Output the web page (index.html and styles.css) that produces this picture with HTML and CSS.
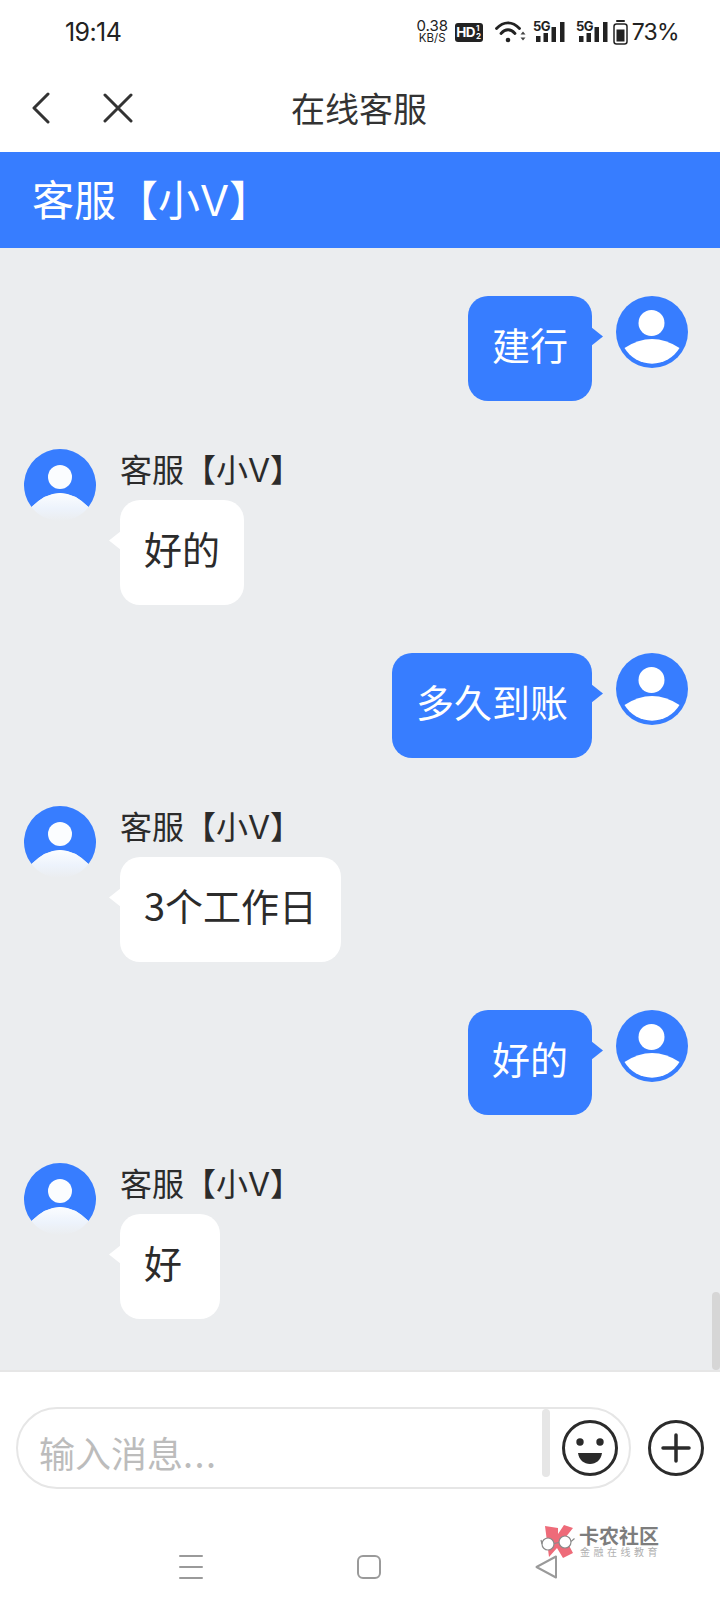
FILE: index.html
```html
<!DOCTYPE html>
<html lang="zh-CN">
<head>
<meta charset="utf-8">
<title>在线客服</title>
<link rel="stylesheet" href="styles.css">
</head>
<body>
<svg class="defs" width="0" height="0" aria-hidden="true">
  <defs>
    <linearGradient id="fade" x1="0" y1="0" x2="0" y2="1">
      <stop offset="0" stop-color="#fbfdff"/>
      <stop offset="0.55" stop-color="#edf3fc"/>
      <stop offset="1" stop-color="#ebedef"/>
    </linearGradient>
    <symbol id="av-user" viewBox="0 0 72 72">
      <circle cx="36" cy="36" r="36" fill="#377dff"/>
      <circle cx="35.500" cy="27" r="13" fill="#fff"/>
      <path d="M8.500 52Q36 34 63.500 52A32 32 0 0 1 8.500 52Z" fill="#fff"/>
    </symbol>
    <symbol id="av-agent" viewBox="0 0 72 72">
      <path d="M7.500 58A36 36 0 1 1 64.500 58Q36 30 7.500 58Z" fill="#377dff"/>
      <circle cx="36" cy="28" r="12" fill="#fbfdff"/>
      <path d="M7.500 58Q36 30 64.500 58A36 36 0 0 1 7.500 58Z" fill="url(#fade)"/>
    </symbol>
    <symbol id="signal" viewBox="0 0 32 26">
      <rect x="3" y="17" width="4.500" height="6" fill="#222"/>
      <rect x="10.500" y="14" width="4.500" height="9" fill="#222"/>
      <rect x="18.500" y="8" width="4.500" height="15" fill="#222"/>
      <rect x="27" y="3" width="4.500" height="20" fill="#222"/>
      <text x="0" y="12" class="sig-text">5G</text>
    </symbol>
  </defs>
</svg>

<div class="app">
  <header class="status">
    <span class="time">19:14</span>
    <div class="status-right">
      <div class="speed"><span class="speed-num">0.38</span><span class="speed-unit">KB/S</span></div>
      <div class="hd"><span class="hd-main">HD</span><span class="hd-frac">1<br>2</span></div>
      <svg class="wifi" width="31" height="24" viewBox="0 0 31 24" fill="none" stroke="#222" stroke-width="2.800" stroke-linecap="round">
        <path d="M1.500 8.500C8.500 1 17.500 1 24.500 8.500"/>
        <path d="M6 13.500C10.500 8.500 15.500 8.500 20 13.500"/>
        <circle cx="13" cy="20" r="2.300" fill="#222" stroke="none"/>
        <path d="M25.500 14.500h5l-2.500-3zM25.500 17.500h5l-2.500 3z" fill="#444" stroke="none"/>
      </svg>
      <svg class="sig1" width="32" height="26"><use href="#signal"/></svg>
      <svg class="sig2" width="32" height="26"><use href="#signal"/></svg>
      <svg class="batt" width="15" height="25" viewBox="0 0 15 25" fill="none">
        <path d="M4 1h7" stroke="#222" stroke-width="2" stroke-linecap="round"/>
        <rect x="1" y="4" width="13" height="20" rx="2.500" stroke="#222" stroke-width="1.500"/>
        <rect x="3.500" y="9.500" width="8" height="12" fill="#222"/>
      </svg>
      <span class="pct">73%</span>
    </div>
  </header>

  <nav class="topnav">
    <svg class="back" width="20" height="32" viewBox="0 0 20 32" fill="none" stroke="#333" stroke-width="3" stroke-linecap="round" stroke-linejoin="round">
      <path d="M17 2L3 16l14 14"/>
    </svg>
    <svg class="close" width="30" height="30" viewBox="0 0 30 30" fill="none" stroke="#333" stroke-width="3" stroke-linecap="round">
      <path d="M2 2l26 26M28 2L2 28"/>
    </svg>
    <h1 class="title">在线客服</h1>
  </nav>

  <div class="band">客服【小V】</div>

  <main class="chat">
    <div class="row row-me">
      <div class="bubble bubble-me">建行</div>
      <svg class="avatar"><use href="#av-user"/></svg>
    </div>
    <div class="row row-agent">
      <svg class="avatar"><use href="#av-agent"/></svg>
      <div class="agent-col">
        <div class="name">客服【小V】</div>
        <div class="bubble bubble-agent">好的</div>
      </div>
    </div>
    <div class="row row-me">
      <div class="bubble bubble-me">多久到账</div>
      <svg class="avatar"><use href="#av-user"/></svg>
    </div>
    <div class="row row-agent">
      <svg class="avatar"><use href="#av-agent"/></svg>
      <div class="agent-col">
        <div class="name">客服【小V】</div>
        <div class="bubble bubble-agent">3个工作日</div>
      </div>
    </div>
    <div class="row row-me">
      <div class="bubble bubble-me">好的</div>
      <svg class="avatar"><use href="#av-user"/></svg>
    </div>
    <div class="row row-agent">
      <svg class="avatar"><use href="#av-agent"/></svg>
      <div class="agent-col">
        <div class="name">客服【小V】</div>
        <div class="bubble bubble-agent">好</div>
      </div>
    </div>
    <div class="scrollbar"></div>
  </main>

  <footer class="composer">
    <div class="input-row">
      <div class="pill">
        <span class="placeholder">输入消息<span class="dots">...</span></span>
        <span class="pill-bar"></span>
        <svg class="round-icon" width="56" height="56" viewBox="0 0 56 56">
          <circle cx="28" cy="28" r="26.500" fill="none" stroke="#2b2b2b" stroke-width="3"/>
          <circle cx="18" cy="22" r="3.700" fill="#2b2b2b"/>
          <circle cx="38" cy="22" r="3.700" fill="#2b2b2b"/>
          <path d="M16 33H40C39 40 34 44 28 44S17 40 16 33Z" fill="#2b2b2b"/>
        </svg>
      </div>
      <svg class="round-icon" width="56" height="56" viewBox="0 0 56 56" fill="none" stroke="#2b2b2b">
        <circle cx="28" cy="28" r="26.500" stroke-width="3"/>
        <path d="M15 28H41M28 15V41" stroke-width="3.500" stroke-linecap="round"/>
      </svg>
    </div>
    <div class="sysnav">
      <svg width="24" height="24" viewBox="0 0 24 24" stroke="#9a9a9a" stroke-width="2" stroke-linecap="round"><path d="M1 1H23M1 12H23M1 23H23"/></svg>
      <svg width="24" height="24" viewBox="0 0 24 24" fill="none" stroke="#9a9a9a" stroke-width="2"><rect x="1" y="1" width="22" height="22" rx="5"/></svg>
      <svg width="22" height="24" viewBox="0 0 22 24" fill="none" stroke="#9a9a9a" stroke-width="2" stroke-linejoin="round"><path d="M21 1.500V22.500L1.500 12Z"/></svg>
    </div>
    <div class="mark">
      <svg class="mark-logo" width="36" height="36" viewBox="0 0 36 36">
        <path d="M5 2L18 4V10L24 1L33 4L25 14L33 29L23 34L17 24L9 33Z" fill="#ee6b79"/>
        <circle cx="8" cy="20" r="6" fill="#fff" stroke="#8a8a8a" stroke-width="1.200"/>
        <circle cx="25" cy="18" r="6" fill="#fff" stroke="#8a8a8a" stroke-width="1.200"/>
        <path d="M14 19.500L19 18.500M31 17.500L34.500 14.500M2 20L1 16" stroke="#8a8a8a" stroke-width="1.200" fill="none"/>
      </svg>
      <div class="mark-text">
        <span class="mark-title">卡农社区</span>
        <span class="mark-sub">金融在线教育</span>
      </div>
    </div>
  </footer>
</div>
</body>
</html>
```

FILE: styles.css
```css
* { box-sizing: border-box; }

html, body {
  margin: 0;
  padding: 0;
}

body {
  width: 720px;
  height: 1612px;
  overflow: hidden;
  background: #fff;
  color: #2b2b2b;
  font-family: "Noto Sans CJK SC", "Noto Sans", sans-serif;
}

.defs { position: absolute; }

.app {
  display: flex;
  flex-direction: column;
  height: 1612px;
}

/* status bar */
.status {
  height: 64px;
  display: flex;
  align-items: center;
  justify-content: space-between;
  padding: 0 41px 0 65px;
  font-family: Inter, "Liberation Sans", sans-serif;
  color: #222;
  flex: none;
}

.time {
  font-size: 25px;
  letter-spacing: -0.600px;
}

.status-right {
  display: flex;
  align-items: center;
}

.speed {
  display: flex;
  flex-direction: column;
  align-items: center;
  width: 33px;
  line-height: 13px;
}

.speed-num { font-size: 15px; }
.speed-unit { font-size: 11.500px; }

.hd {
  margin-left: 6px;
  width: 28px;
  height: 19px;
  border-radius: 3px;
  background: #222;
  color: #fff;
  display: flex;
  align-items: center;
  justify-content: center;
  font-weight: 700;
}

.hd-main { font-size: 13.500px; letter-spacing: -0.500px; }
.hd-frac { font-size: 8px; line-height: 8px; margin-left: 1px; }

.wifi { margin-left: 12px; }
.sig1 { margin-left: 7px; }
.sig2 { margin-left: 11px; }
.batt { margin-left: 5px; }

.sig-text {
  font-family: Inter, "Liberation Sans", sans-serif;
  font-size: 13px;
  font-weight: 700;
  fill: #222;
  letter-spacing: -0.500px;
}

.pct {
  margin-left: 4px;
  font-size: 23px;
  letter-spacing: -0.700px;
}

/* top navigation */
.topnav {
  position: relative;
  height: 88px;
  display: flex;
  align-items: center;
  padding-left: 31px;
  flex: none;
}

.close { margin-left: 52px; }

.title {
  flex: none;
  margin: 0 0 0 158px;
  font-size: 34px;
  font-weight: 400;
  color: #333;
  line-height: 48px;
}

/* blue band */
.band {
  height: 96px;
  flex: none;
  background: #377dff;
  color: #fff;
  font-family: Inter, "Noto Sans CJK SC", sans-serif;
  font-size: 42px;
  line-height: 98px;
  padding-left: 32px;
  overflow: hidden;
}

/* chat */
.chat {
  position: relative;
  flex: 1;
  background: #ebedef;
  padding-top: 48px;
  display: flex;
  flex-direction: column;
  gap: 48px;
  overflow: hidden;
}

.row { display: flex; gap: 24px; }
.row-me { justify-content: flex-end; padding-right: 32px; }
.row-agent { padding-left: 24px; }

.avatar {
  width: 72px;
  height: 72px;
  flex: none;
}

.agent-col {
  display: flex;
  flex-direction: column;
  align-items: flex-start;
}

.name {
  height: 51px;
  font-family: Inter, "Noto Sans CJK SC", sans-serif;
  font-size: 32px;
  line-height: 44px;
  color: #2b2b2b;
}

.bubble {
  position: relative;
  min-width: 100px;
  height: 105px;
  padding: 0 24px;
  border-radius: 20px;
  font-size: 38px;
  line-height: 95px;
}

.bubble-me {
  background: #377dff;
  color: #fff;
}

.bubble-agent {
  background: #fff;
  color: #2b2b2b;
}

.bubble::after {
  content: "";
  position: absolute;
  top: 31px;
  width: 12px;
  height: 19px;
}

.bubble-me::after {
  right: -11px;
  background: #377dff;
  clip-path: polygon(0 0, 100% 50%, 0 100%);
}

.bubble-agent::after {
  left: -11px;
  background: #fff;
  clip-path: polygon(100% 0, 0 50%, 100% 100%);
}

.scrollbar {
  position: absolute;
  right: 0;
  bottom: 0;
  width: 8px;
  height: 78px;
  border-radius: 4px;
  background: #d6d6d6;
}

/* composer */
.composer {
  position: relative;
  height: 242px;
  flex: none;
  border-top: 2px solid #e6e6e6;
  background: #fff;
  padding: 35px 0 0 16px;
}

.input-row {
  display: flex;
  align-items: center;
  gap: 17px;
}

.pill {
  width: 615px;
  height: 82px;
  border: 2px solid #e6e6e6;
  border-radius: 41px;
  padding: 0 11px 0 21px;
  display: flex;
  align-items: center;
}

.placeholder {
  flex: 1;
  font-size: 36px;
  color: #bcbcbc;
  line-height: 50px;
  margin-top: 8px;
}

.dots { letter-spacing: 1.500px; }

.pill-bar {
  align-self: flex-start;
  width: 8px;
  height: 68px;
  border-radius: 4px;
  background: #e6e6e6;
  margin-right: 12px;
}

.round-icon { flex: none; }

.sysnav {
  display: flex;
  gap: 154px;
  padding-left: 163px;
  margin-top: 66px;
}

.mark {
  position: absolute;
  left: 540px;
  top: 152px;
  display: flex;
  gap: 3px;
}

.mark-text {
  display: flex;
  flex-direction: column;
  align-items: flex-start;
  margin-top: 1px;
}

.mark-title {
  font-size: 20px;
  line-height: 21px;
  font-weight: 700;
  color: #7d7d7d;
}

.mark-sub {
  font-size: 10px;
  line-height: 12px;
  letter-spacing: 3.500px;
  color: #b0b0b0;
  margin-left: 1px;
}
```
